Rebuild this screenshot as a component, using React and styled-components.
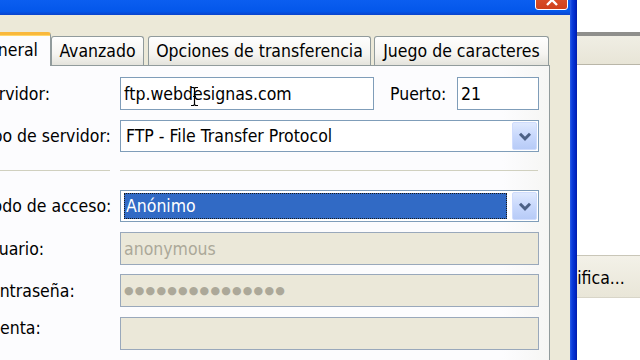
import React from "react";
import styled, { createGlobalStyle } from "styled-components";

const GlobalStyle = createGlobalStyle`
  html, body {
    margin: 0;
    padding: 0;
    background: #ffffff;
  }
  body {
    width: 640px;
    height: 360px;
    overflow: hidden;
    font-family: "DejaVu Sans Condensed", "DejaVu Sans", sans-serif;
    font-size: 17.5px;
    color: #000;
  }
`;

const Screen = styled.div`
  display: flex;
  width: 640px;
  height: 360px;
  overflow: hidden;
`;

const Window = styled.div`
  flex: none;
  display: flex;
  width: 617px;
  margin-left: -40px;
`;

const WindowMain = styled.div`
  flex: 1;
  display: flex;
  flex-direction: column;
  background: #ece9d8;
`;

const WindowEdge = styled.div`
  flex: none;
  width: 7px;
  background: linear-gradient(to right, #2a5ee8 0, #0a3ddc 2px, #0028c8 5px, #001ca8 7px);
`;

const TitleBar = styled.div`
  flex: none;
  height: 15px;
  display: flex;
  justify-content: flex-end;
  align-items: flex-end;
  padding-right: 2px;
  overflow: hidden;
  background: linear-gradient(#0b5ef0, #0457ea 75%, #0a44cc);
`;

const CloseButton = styled.div`
  position: relative;
  width: 33px;
  height: 26px;
  margin-bottom: 5px;
  box-sizing: border-box;
  border: 1px solid #ffffff;
  border-radius: 3px;
  background: linear-gradient(#e4623a, #d0401a);
  display: flex;
  align-items: center;
  justify-content: center;
`;

const Body = styled.div`
  flex: 1;
  display: flex;
  flex-direction: column;
  padding: 17px 20px 0 4px;
  min-height: 0;
`;

const TabStrip = styled.div`
  flex: none;
  display: flex;
  align-items: flex-end;
  height: 33px;
`;

const Tab = styled.div`
  position: relative;
  box-sizing: border-box;
  width: ${(p) => p.$w}px;
  height: ${(p) => (p.$active ? 34 : 29)}px;
  margin-right: ${(p) => p.$gap || 0}px;
  margin-bottom: ${(p) => (p.$active ? -1 : 0)}px;
  border: 1px solid #919b9c;
  border-bottom: none;
  border-radius: 3px 3px 0 0;
  background: ${(p) =>
    p.$active ? "#fcfcfe" : "linear-gradient(#fefefe, #f6f5f1 60%, #e4e3dc)"};
  display: flex;
  align-items: center;
  justify-content: center;
  white-space: nowrap;
  z-index: ${(p) => (p.$active ? 1 : 0)};
  ${(p) =>
    p.$active &&
    `
    border-top: 3px solid #f9b83c;
    box-shadow: inset 0 1px 0 #ffd76a;
    padding-bottom: 2px;
    justify-content: flex-end;
    padding-right: 12px;
  `}
`;

const Panel = styled.div`
  flex: 1;
  box-sizing: border-box;
  border: 1px solid #919b9c;
  border-bottom: none;
  background: linear-gradient(to right, #fcfcfe 92%, #f6f6f4);
  padding: 11px 10px 0 14px;
  display: flex;
  flex-direction: column;
`;

const Row = styled.div`
  display: grid;
  grid-template-columns: 141px 1fr;
  align-items: center;
  margin-top: ${(p) => p.$mt || 0}px;
`;

const Label = styled.div`
  white-space: nowrap;
  margin-bottom: ${(p) => p.$raise || 0}px;
`;

const InlineLabel = styled.div`
  white-space: nowrap;
  margin-left: 16px;
`;

const FieldLine = styled.div`
  display: flex;
  align-items: center;
`;

const Field = styled.div`
  position: relative;
  box-sizing: border-box;
  height: ${(p) => p.$h || 33}px;
  width: ${(p) => (p.$w ? `${p.$w}px` : "100%")};
  margin-left: ${(p) => (p.$push ? "auto" : "0")};
  border: 1px solid ${(p) => (p.$disabled ? "#99a8bb" : "#7f9db9")};
  background: ${(p) => (p.$disabled ? "#ebe8d9" : "#ffffff")};
  color: ${(p) => (p.$disabled ? "#aca899" : "#000000")};
  display: flex;
  align-items: center;
  padding: 0 3px;
  white-space: nowrap;
  overflow: hidden;
`;

const Select = styled.div`
  box-sizing: border-box;
  height: 32px;
  border: 1px solid #7f9db9;
  background: #ffffff;
  display: flex;
  align-items: center;
  padding: 0 1px 0 3px;
`;

const SelectValue = styled.div`
  flex: 1;
  height: 26px;
  display: flex;
  align-items: center;
  padding-left: 2px;
  margin-right: 5px;
  box-sizing: border-box;
  white-space: nowrap;
  ${(p) =>
    p.$selected &&
    `
    background: #316ac5;
    color: #ffffff;
    outline: 1px dotted #1a1a1a;
    outline-offset: -1px;
  `}
`;

const DropButton = styled.div`
  flex: none;
  width: 25px;
  height: 28px;
  box-sizing: border-box;
  border: 1px solid #cfdcfd;
  border-radius: 2px;
  background: linear-gradient(#dfe9fe, #c8d8fc 50%, #b7cbf7);
  display: flex;
  align-items: center;
  justify-content: center;
`;

const Separator = styled.div`
  display: grid;
  grid-template-columns: 131px 1fr;
  column-gap: 10px;
  margin-top: 18px;
  padding-right: 1px;
`;

const Rule = styled.div`
  height: 1px;
  background: #d0d0bf;
`;

const Dots = styled.span`
  font-family: "DejaVu Sans", sans-serif;
  font-size: 11px;
  letter-spacing: 1.2px;
  color: #aca899;
`;

const Cursor = styled.svg`
  position: absolute;
  left: 69px;
  top: 8px;
`;

const BackApp = styled.div`
  flex: 1;
  display: flex;
  flex-direction: column;
  background: #ffffff;
  overflow: hidden;
`;

const Blank = styled.div`
  flex: none;
  height: ${(p) => p.$h}px;
`;

const Strip = styled.div`
  flex: none;
  height: 33px;
  box-sizing: border-box;
  border-top: 4px solid #8f8f8c;
  border-bottom: 1px solid #b9b6a8;
  background: linear-gradient(#f0eee4, #e8e5d7);
`;

const BackButton = styled.div`
  flex: none;
  height: 43px;
  box-sizing: border-box;
  border-top: 1px solid #c9c6b8;
  border-bottom: 1px solid #d8d5c8;
  background: linear-gradient(#f3f1e8, #e9e6d8);
  display: flex;
  align-items: flex-end;
  padding-bottom: 9px;
  white-space: nowrap;
`;

const BackButtonText = styled.span`
  margin-left: -33px;
`;

const Chevron = () => (
  <svg width="14" height="9" viewBox="0 0 14 9">
    <polyline
      points="2,1.8 7,6.8 12,1.8"
      fill="none"
      stroke="#4d6185"
      strokeWidth="3"
    />
  </svg>
);

const App = () => {
  return (
    <>
      <GlobalStyle />
      <Screen>
        <Window>
          <WindowMain>
            <TitleBar>
              <CloseButton>
                <svg width="14" height="14" viewBox="0 0 14 14" style={{ marginTop: 6 }}>
                  <path d="M2 2L12 12M12 2L2 12" stroke="#ffffff" strokeWidth="2.4" />
                </svg>
              </CloseButton>
            </TitleBar>
            <Body>
              <TabStrip>
                <Tab $active $w={87}>General</Tab>
                <Tab $w={93} $gap={4}>Avanzado</Tab>
                <Tab $w={223} $gap={3}>Opciones de transferencia</Tab>
                <Tab $w={175}>Juego de caracteres</Tab>
              </TabStrip>
              <Panel>
                <Row>
                  <Label>Servidor:</Label>
                  <FieldLine>
                    <Field $w={254}>
                      ftp.webdesignas.com
                      <Cursor width="9" height="21" viewBox="0 0 9 21">
                        <path
                          d="M1 1.5h2.5l1 1 1-1H8M4.5 2.5v16M1 19.5h2.5l1-1 1 1H8M3 10.5h3"
                          fill="none"
                          stroke="#000"
                          strokeWidth="1.2"
                        />
                      </Cursor>
                    </Field>
                    <InlineLabel>Puerto:</InlineLabel>
                    <Field $w={82} $push>
                      21
                    </Field>
                  </FieldLine>
                </Row>
                <Row $mt={10}>
                  <Label>Tipo de servidor:</Label>
                  <Select>
                    <SelectValue>FTP - File Transfer Protocol</SelectValue>
                    <DropButton>
                      <Chevron />
                    </DropButton>
                  </Select>
                </Row>
                <Separator>
                  <Rule />
                  <Rule />
                </Separator>
                <Row $mt={19}>
                  <Label>Modo de acceso:</Label>
                  <Select>
                    <SelectValue $selected>Anónimo</SelectValue>
                    <DropButton>
                      <Chevron />
                    </DropButton>
                  </Select>
                </Row>
                <Row $mt={10}>
                  <Label>Usuario:</Label>
                  <Field $disabled>anonymous</Field>
                </Row>
                <Row $mt={9}>
                  <Label>Contraseña:</Label>
                  <Field $disabled>
                    <Dots>●●●●●●●●●●●●●●●</Dots>
                  </Field>
                </Row>
                <Row $mt={10}>
                  <Label $raise={12}>Cuenta:</Label>
                  <Field $disabled />
                </Row>
              </Panel>
            </Body>
          </WindowMain>
          <WindowEdge />
        </Window>
        <BackApp>
          <Blank $h={32} />
          <Strip />
          <Blank $h={190} />
          <BackButton>
            <BackButtonText>Modifica...</BackButtonText>
          </BackButton>
        </BackApp>
      </Screen>
    </>
  );
};

export default App;
